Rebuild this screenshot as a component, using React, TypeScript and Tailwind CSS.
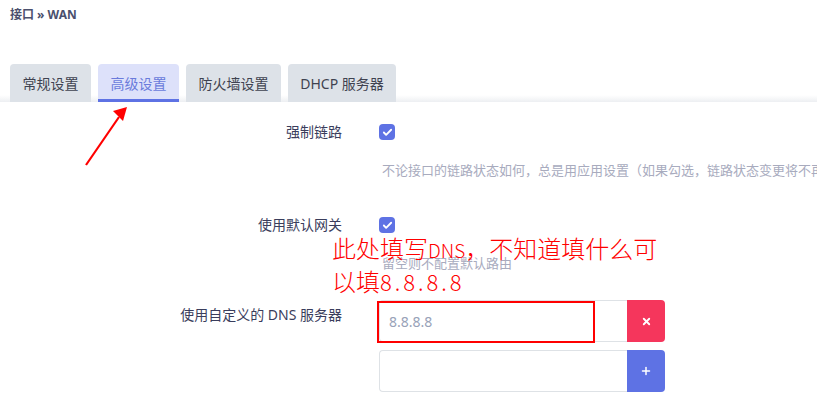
import { Check, X, Plus } from 'lucide-react';

const ui = { fontFamily: '"Noto Sans", "Noto Sans CJK SC", sans-serif' };
const note = { fontFamily: '"Noto Sans CJK SC", serif', fontWeight: 300 };

const tabs = [
  { t: '常规设置', w: 'w-[81px]' },
  { t: '高级设置', w: 'w-[81px]' },
  { t: '防火墙设置', w: 'w-[95px]' },
  { t: 'DHCP 服务器', w: 'w-[108px]' },
];

function Checkbox() {
  return (
    <span className="w-4 h-4 rounded-[4px] bg-[#5e72e4] flex items-center justify-center">
      <Check className="w-[11px] h-[11px] text-white" strokeWidth={4} />
    </span>
  );
}

function Row({ label, children }: { label: string; children: React.ReactNode }) {
  return (
    <div className="flex">
      <div className="w-[342px] shrink-0 text-right text-[14px] leading-5 text-[#3a3d5c]">{label}</div>
      <div className="pl-[37px] flex-1 min-w-0">{children}</div>
    </div>
  );
}

export default function App() {
  return (
    <div className="relative w-[817px] h-[411px] bg-white overflow-hidden" style={ui}>
      <div className="px-[10px] pt-[6px] text-[12px] font-bold text-[#4b506d]">接口 » WAN</div>

      <div className="mt-[40px] h-[38px] flex gap-[7px] px-[10px] bg-[linear-gradient(to_bottom,#fff_82%,#edeff2)]">
        {tabs.map(({ t, w }, i) => (
          <div
            key={t}
            className={
              i === 1
                ? `${w} flex items-center justify-center rounded-t-[4px] text-[14px] bg-[#dde1fa] text-[#6a7bdc] border-b-[3px] border-[#5e72e4] pt-[3px]`
                : `${w} flex items-center justify-center rounded-t-[4px] text-[14px] bg-[#dde2e8] text-[#3f4250]`
            }
          >
            {t}
          </div>
        ))}
      </div>

      <div className="pt-[20px]">
        <Row label="强制链路">
          <div className="h-5 flex items-center">
            <Checkbox />
          </div>
        </Row>
        <div className="pl-[382px] mt-[18px] text-[13px] leading-5 text-[#a8abbe] whitespace-nowrap">
          不论接口的链路状态如何，总是用应用设置（如果勾选，链路状态变更将不再调用热插拔事件处理程序）
        </div>

        <div className="mt-[35px]">
          <Row label="使用默认网关">
            <div className="h-5 flex items-center">
              <Checkbox />
            </div>
          </Row>
        </div>
        <div className="pl-[382px] mt-[18px] text-[13px] leading-5 text-[#a8abbe] whitespace-nowrap">留空则不配置默认路由</div>

        <div className="mt-[32px]">
          <Row label="使用自定义的 DNS 服务器">
            <div className="flex flex-col gap-[8px] w-[286px] -mt-[5px]">
              <div className="flex h-[42px]">
                <div className="flex-1 border border-[#dee2e6] border-r-0 rounded-l-[4px] flex items-center pl-[9px] text-[14px] text-[#98a2b8]">
                  8.8.8.8
                </div>
                <button className="w-[38px] bg-[#f5365c] rounded-r-[4px] flex items-center justify-center">
                  <X className="w-[11px] h-[11px] text-white" strokeWidth={4} />
                </button>
              </div>
              <div className="flex h-[42px]">
                <div className="flex-1 border border-[#dee2e6] border-r-0 rounded-l-[4px]" />
                <button className="w-[38px] bg-[#5e72e4] rounded-r-[4px] flex items-center justify-center">
                  <Plus className="w-[12px] h-[12px] text-white" strokeWidth={3} />
                </button>
              </div>
            </div>
          </Row>
        </div>
      </div>

      {/* annotations */}
      <div className="absolute left-[377px] top-[301px] w-[218px] h-[42px] border-2 border-[#ff0000]" />
      <div className="absolute left-[332px] top-[232px] text-[24px] leading-[31px] text-[#ff0000] whitespace-nowrap" style={note}>
        <div>
          此处填写<span className="text-[19px]">DNS</span>，不知道填什么可
        </div>
        <div>
          以填<span className="text-[22px] tracking-[3px]">8.8.8.8</span>
        </div>
      </div>
      <svg className="absolute left-0 top-0" width="817" height="411">
        <line x1="86" y1="165" x2="119" y2="117" stroke="#ff0000" strokeWidth="2.2" />
        <polygon points="127,107 113,111 123,121" fill="#ff0000" />
      </svg>
    </div>
  );
}
